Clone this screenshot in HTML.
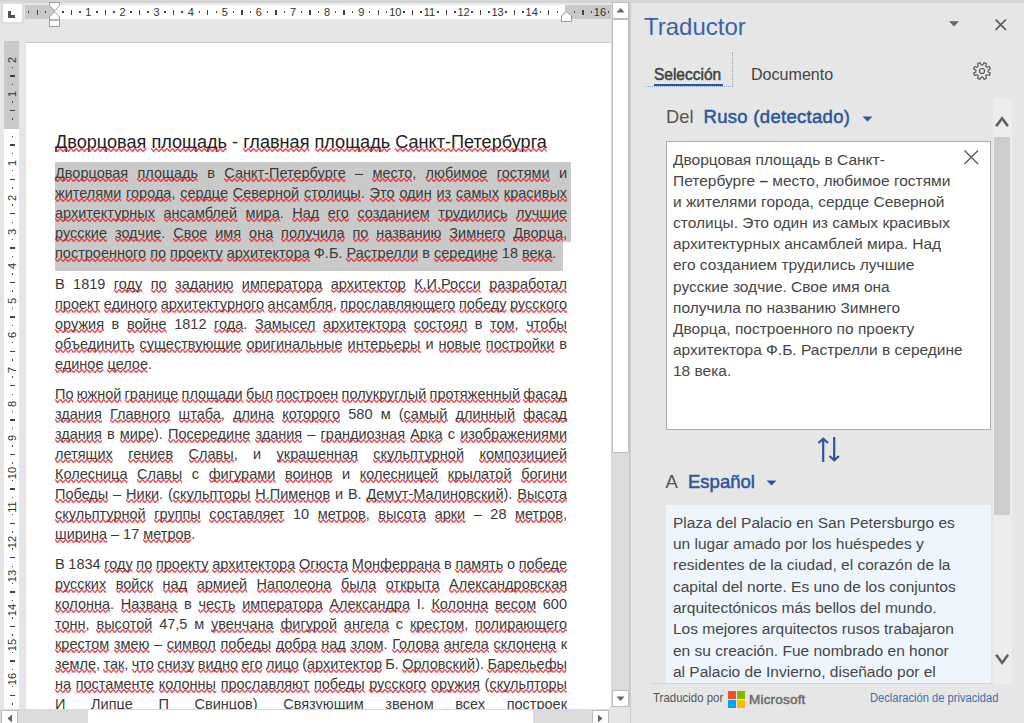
<!DOCTYPE html>
<html><head><meta charset="utf-8"><title>Word - Traductor</title><style>
*{margin:0;padding:0;box-sizing:border-box}
html,body{width:1024px;height:723px;overflow:hidden;background:#e6e6e6}
body{position:relative;font-family:"Liberation Sans",sans-serif}
.a{position:absolute}
#topstrip{left:0;top:0;width:1024px;height:2.5px;background:#d5d5d5}
#tabsel{left:0.5px;top:2px;width:23.5px;height:22px;background:#fff;border:2px solid #dedede}
#tabsel i{position:absolute;left:5.5px;top:7px;width:2.6px;height:7px;background:#555}
#tabsel b{position:absolute;left:5.5px;top:11.4px;width:7.4px;height:2.6px;background:#555}
#hr{left:25px;top:4.5px;width:586px;height:14.3px;background:#fff}
#hrl{left:0;top:0;width:29.3px;height:14.3px;background:#c9c9c9}
#hrr{left:539.8px;top:0;width:46.2px;height:14.3px;background:#c9c9c9}
.rn{position:absolute;top:-0.5px;width:20px;text-align:center;font-size:11px;line-height:16px;color:#333}
.rt{position:absolute;background:#444}
#vr{left:4px;top:41px;width:15px;height:668px;background:#fff}
#vrt{left:0;top:0;width:15px;height:88px;background:#c9c9c9}
.vn{position:absolute;left:-2.5px;width:20px;height:20px;text-align:center;font-size:11px;line-height:20px;color:#333;transform:rotate(-90deg)}
#page{left:26px;top:41.5px;width:585.5px;height:667.5px;background:#fff;border-top:1.2px solid #c8c8c8}
#doc{left:55px;top:0;width:512px;height:709px;color:#3a3a3a}
.ln{position:absolute;left:0;width:512px;height:20px;line-height:20px;white-space:nowrap;text-align:justify;text-align-last:justify;font-size:14.5px;word-spacing:-2px}
.ln.last{text-align:left;text-align-last:left;word-spacing:0}
.q{position:relative}
.tp{font-style:normal;color:transparent}
.w{position:absolute;left:0;top:12.77px;width:100%;height:4px;overflow:visible}
#title .w{top:16.71px}
#title{position:absolute;left:0;top:129.62px;width:560px;height:24px;line-height:24px;font-size:18.13px;color:#222;white-space:nowrap}
.hl{position:absolute;background:#c9c9c9}
#vsb{left:610.5px;top:2px;width:19.5px;height:707px;background:#dbdbdb;border-right:1.5px solid #cacaca}
.box{position:absolute;background:#fff;border:1px solid #bdbdbd}
#hsb{left:0;top:709px;width:611px;height:14px;background:#dbdbdb}
#corner{left:609px;top:707px;width:21px;height:16px;background:#e6e6e6}
#pane{left:630px;top:2.5px;width:394px;height:720.5px;background:#e6e6e6;border-left:1.5px solid #cdcdcd}
.pl{position:absolute;left:0;height:21px;line-height:21px;font-size:15.5px;letter-spacing:0px;color:#464646;white-space:nowrap}
.pt{position:absolute;white-space:nowrap;line-height:1}
</style></head>
<body>
<svg width="0" height="0" style="position:absolute"><defs><pattern id="wv" patternUnits="userSpaceOnUse" width="5.333" height="4"><path d="M-2.667,3.4 C-1.5,3.4 -1.2,0.6 0,0.6 C1.2,0.6 1.5,3.4 2.667,3.4 C3.8,3.4 4.1,0.6 5.333,0.6 C6.5,0.6 6.8,3.4 8,3.4" fill="none" stroke="#ec2226" stroke-width="1.2"/></pattern></defs></svg>
<div class="a" id="topstrip"></div>
<div class="a" id="tabsel"><i></i><b></b></div>
<div class="a" id="hr"><div class="a" id="hrl"></div><div class="a" id="hrr"></div>
<div class="rt" style="left:3.02px;top:6.8px;width:1.4px;height:1.4px"></div>
<div class="rt" style="left:11.55px;top:5px;width:1.4px;height:5px"></div>
<div class="rt" style="left:20.07px;top:6.8px;width:1.4px;height:1.4px"></div>
<div class="rt" style="left:37.12px;top:6.8px;width:1.4px;height:1.4px"></div>
<div class="rt" style="left:45.65px;top:5px;width:1.4px;height:5px"></div>
<div class="rt" style="left:54.17px;top:6.8px;width:1.4px;height:1.4px"></div>
<div class="rn" style="left:53.40px">1</div>
<div class="rt" style="left:71.22px;top:6.8px;width:1.4px;height:1.4px"></div>
<div class="rt" style="left:79.75px;top:5px;width:1.4px;height:5px"></div>
<div class="rt" style="left:88.27px;top:6.8px;width:1.4px;height:1.4px"></div>
<div class="rn" style="left:87.50px">2</div>
<div class="rt" style="left:105.33px;top:6.8px;width:1.4px;height:1.4px"></div>
<div class="rt" style="left:113.85px;top:5px;width:1.4px;height:5px"></div>
<div class="rt" style="left:122.37px;top:6.8px;width:1.4px;height:1.4px"></div>
<div class="rn" style="left:121.60px">3</div>
<div class="rt" style="left:139.43px;top:6.8px;width:1.4px;height:1.4px"></div>
<div class="rt" style="left:147.95px;top:5px;width:1.4px;height:5px"></div>
<div class="rt" style="left:156.48px;top:6.8px;width:1.4px;height:1.4px"></div>
<div class="rn" style="left:155.70px">4</div>
<div class="rt" style="left:173.53px;top:6.8px;width:1.4px;height:1.4px"></div>
<div class="rt" style="left:182.05px;top:5px;width:1.4px;height:5px"></div>
<div class="rt" style="left:190.57px;top:6.8px;width:1.4px;height:1.4px"></div>
<div class="rn" style="left:189.80px">5</div>
<div class="rt" style="left:207.62px;top:6.8px;width:1.4px;height:1.4px"></div>
<div class="rt" style="left:216.15px;top:5px;width:1.4px;height:5px"></div>
<div class="rt" style="left:224.68px;top:6.8px;width:1.4px;height:1.4px"></div>
<div class="rn" style="left:223.90px">6</div>
<div class="rt" style="left:241.73px;top:6.8px;width:1.4px;height:1.4px"></div>
<div class="rt" style="left:250.25px;top:5px;width:1.4px;height:5px"></div>
<div class="rt" style="left:258.78px;top:6.8px;width:1.4px;height:1.4px"></div>
<div class="rn" style="left:258.00px">7</div>
<div class="rt" style="left:275.83px;top:6.8px;width:1.4px;height:1.4px"></div>
<div class="rt" style="left:284.35px;top:5px;width:1.4px;height:5px"></div>
<div class="rt" style="left:292.88px;top:6.8px;width:1.4px;height:1.4px"></div>
<div class="rn" style="left:292.10px">8</div>
<div class="rt" style="left:309.93px;top:6.8px;width:1.4px;height:1.4px"></div>
<div class="rt" style="left:318.45px;top:5px;width:1.4px;height:5px"></div>
<div class="rt" style="left:326.98px;top:6.8px;width:1.4px;height:1.4px"></div>
<div class="rn" style="left:326.20px">9</div>
<div class="rt" style="left:344.03px;top:6.8px;width:1.4px;height:1.4px"></div>
<div class="rt" style="left:352.55px;top:5px;width:1.4px;height:5px"></div>
<div class="rt" style="left:361.08px;top:6.8px;width:1.4px;height:1.4px"></div>
<div class="rn" style="left:360.30px">10</div>
<div class="rt" style="left:378.13px;top:6.8px;width:1.4px;height:1.4px"></div>
<div class="rt" style="left:386.65px;top:5px;width:1.4px;height:5px"></div>
<div class="rt" style="left:395.18px;top:6.8px;width:1.4px;height:1.4px"></div>
<div class="rn" style="left:394.40px">11</div>
<div class="rt" style="left:412.23px;top:6.8px;width:1.4px;height:1.4px"></div>
<div class="rt" style="left:420.75px;top:5px;width:1.4px;height:5px"></div>
<div class="rt" style="left:429.28px;top:6.8px;width:1.4px;height:1.4px"></div>
<div class="rn" style="left:428.50px">12</div>
<div class="rt" style="left:446.33px;top:6.8px;width:1.4px;height:1.4px"></div>
<div class="rt" style="left:454.85px;top:5px;width:1.4px;height:5px"></div>
<div class="rt" style="left:463.38px;top:6.8px;width:1.4px;height:1.4px"></div>
<div class="rn" style="left:462.60px">13</div>
<div class="rt" style="left:480.43px;top:6.8px;width:1.4px;height:1.4px"></div>
<div class="rt" style="left:488.95px;top:5px;width:1.4px;height:5px"></div>
<div class="rt" style="left:497.47px;top:6.8px;width:1.4px;height:1.4px"></div>
<div class="rn" style="left:496.70px">14</div>
<div class="rt" style="left:514.52px;top:6.8px;width:1.4px;height:1.4px"></div>
<div class="rt" style="left:523.05px;top:5px;width:1.4px;height:5px"></div>
<div class="rt" style="left:531.57px;top:6.8px;width:1.4px;height:1.4px"></div>
<div class="rt" style="left:548.62px;top:6.8px;width:1.4px;height:1.4px"></div>
<div class="rt" style="left:557.15px;top:5px;width:1.4px;height:5px"></div>
<div class="rt" style="left:565.67px;top:6.8px;width:1.4px;height:1.4px"></div>
<div class="rn" style="left:564.90px">16</div>
<div class="rt" style="left:582.72px;top:6.8px;width:1.4px;height:1.4px"></div>
</div>
<svg class="a" style="left:48px;top:1px" width="14" height="27"><path d="M1.5,1.5 L11.5,1.5 L11.5,4.5 L6.5,10 L1.5,4.5 Z M6.5,10.5 L11.5,16 L11.5,19 L1.5,19 L1.5,16 Z M1.5,19 L11.5,19 L11.5,25.5 L1.5,25.5 Z" fill="#fff" stroke="#9a9a9a" stroke-width="1"/></svg>
<svg class="a" style="left:560px;top:11px" width="14" height="12"><path d="M1.5,4.5 L6.5,0.8 L11.5,4.5 L11.5,10.5 L1.5,10.5 Z" fill="#fff" stroke="#9a9a9a" stroke-width="1"/></svg>
<div class="a" id="page"></div>
<div class="a" id="vr"><div class="a" id="vrt"></div>
<div class="vn" style="top:8.90px">2</div>
<div class="rt" style="top:25.80px;left:8px;height:1.4px;width:1.4px"></div>
<div class="rt" style="top:34.40px;left:6.4px;height:1.4px;width:5px"></div>
<div class="rt" style="top:43.00px;left:8px;height:1.4px;width:1.4px"></div>
<div class="vn" style="top:43.30px">1</div>
<div class="rt" style="top:60.20px;left:8px;height:1.4px;width:1.4px"></div>
<div class="rt" style="top:68.80px;left:6.4px;height:1.4px;width:5px"></div>
<div class="rt" style="top:77.40px;left:8px;height:1.4px;width:1.4px"></div>
<div class="rt" style="top:94.60px;left:8px;height:1.4px;width:1.4px"></div>
<div class="rt" style="top:103.20px;left:6.4px;height:1.4px;width:5px"></div>
<div class="rt" style="top:111.80px;left:8px;height:1.4px;width:1.4px"></div>
<div class="vn" style="top:112.10px">1</div>
<div class="rt" style="top:129.00px;left:8px;height:1.4px;width:1.4px"></div>
<div class="rt" style="top:137.60px;left:6.4px;height:1.4px;width:5px"></div>
<div class="rt" style="top:146.20px;left:8px;height:1.4px;width:1.4px"></div>
<div class="vn" style="top:146.50px">2</div>
<div class="rt" style="top:163.40px;left:8px;height:1.4px;width:1.4px"></div>
<div class="rt" style="top:172.00px;left:6.4px;height:1.4px;width:5px"></div>
<div class="rt" style="top:180.60px;left:8px;height:1.4px;width:1.4px"></div>
<div class="vn" style="top:180.90px">3</div>
<div class="rt" style="top:197.80px;left:8px;height:1.4px;width:1.4px"></div>
<div class="rt" style="top:206.40px;left:6.4px;height:1.4px;width:5px"></div>
<div class="rt" style="top:215.00px;left:8px;height:1.4px;width:1.4px"></div>
<div class="vn" style="top:215.30px">4</div>
<div class="rt" style="top:232.20px;left:8px;height:1.4px;width:1.4px"></div>
<div class="rt" style="top:240.80px;left:6.4px;height:1.4px;width:5px"></div>
<div class="rt" style="top:249.40px;left:8px;height:1.4px;width:1.4px"></div>
<div class="vn" style="top:249.70px">5</div>
<div class="rt" style="top:266.60px;left:8px;height:1.4px;width:1.4px"></div>
<div class="rt" style="top:275.20px;left:6.4px;height:1.4px;width:5px"></div>
<div class="rt" style="top:283.80px;left:8px;height:1.4px;width:1.4px"></div>
<div class="vn" style="top:284.10px">6</div>
<div class="rt" style="top:301.00px;left:8px;height:1.4px;width:1.4px"></div>
<div class="rt" style="top:309.60px;left:6.4px;height:1.4px;width:5px"></div>
<div class="rt" style="top:318.20px;left:8px;height:1.4px;width:1.4px"></div>
<div class="vn" style="top:318.50px">7</div>
<div class="rt" style="top:335.40px;left:8px;height:1.4px;width:1.4px"></div>
<div class="rt" style="top:344.00px;left:6.4px;height:1.4px;width:5px"></div>
<div class="rt" style="top:352.60px;left:8px;height:1.4px;width:1.4px"></div>
<div class="vn" style="top:352.90px">8</div>
<div class="rt" style="top:369.80px;left:8px;height:1.4px;width:1.4px"></div>
<div class="rt" style="top:378.40px;left:6.4px;height:1.4px;width:5px"></div>
<div class="rt" style="top:387.00px;left:8px;height:1.4px;width:1.4px"></div>
<div class="vn" style="top:387.30px">9</div>
<div class="rt" style="top:404.20px;left:8px;height:1.4px;width:1.4px"></div>
<div class="rt" style="top:412.80px;left:6.4px;height:1.4px;width:5px"></div>
<div class="rt" style="top:421.40px;left:8px;height:1.4px;width:1.4px"></div>
<div class="vn" style="top:421.70px">10</div>
<div class="rt" style="top:438.60px;left:8px;height:1.4px;width:1.4px"></div>
<div class="rt" style="top:447.20px;left:6.4px;height:1.4px;width:5px"></div>
<div class="rt" style="top:455.80px;left:8px;height:1.4px;width:1.4px"></div>
<div class="vn" style="top:456.10px">11</div>
<div class="rt" style="top:473.00px;left:8px;height:1.4px;width:1.4px"></div>
<div class="rt" style="top:481.60px;left:6.4px;height:1.4px;width:5px"></div>
<div class="rt" style="top:490.20px;left:8px;height:1.4px;width:1.4px"></div>
<div class="vn" style="top:490.50px">12</div>
<div class="rt" style="top:507.40px;left:8px;height:1.4px;width:1.4px"></div>
<div class="rt" style="top:516.00px;left:6.4px;height:1.4px;width:5px"></div>
<div class="rt" style="top:524.60px;left:8px;height:1.4px;width:1.4px"></div>
<div class="vn" style="top:524.90px">13</div>
<div class="rt" style="top:541.80px;left:8px;height:1.4px;width:1.4px"></div>
<div class="rt" style="top:550.40px;left:6.4px;height:1.4px;width:5px"></div>
<div class="rt" style="top:559.00px;left:8px;height:1.4px;width:1.4px"></div>
<div class="vn" style="top:559.30px">14</div>
<div class="rt" style="top:576.20px;left:8px;height:1.4px;width:1.4px"></div>
<div class="rt" style="top:584.80px;left:6.4px;height:1.4px;width:5px"></div>
<div class="rt" style="top:593.40px;left:8px;height:1.4px;width:1.4px"></div>
<div class="vn" style="top:593.70px">15</div>
<div class="rt" style="top:610.60px;left:8px;height:1.4px;width:1.4px"></div>
<div class="rt" style="top:619.20px;left:6.4px;height:1.4px;width:5px"></div>
<div class="rt" style="top:627.80px;left:8px;height:1.4px;width:1.4px"></div>
<div class="vn" style="top:628.10px">16</div>
<div class="rt" style="top:645.00px;left:8px;height:1.4px;width:1.4px"></div>
<div class="rt" style="top:653.60px;left:6.4px;height:1.4px;width:5px"></div>
<div class="rt" style="top:662.20px;left:8px;height:1.4px;width:1.4px"></div>
</div>
<div class="a" id="doc">
<div class="hl" style="left:0;top:161.6px;width:515.8px;height:80px"></div>
<div class="hl" style="left:0;top:241.5px;width:508px;height:29.6px"></div>
<div id="title"><span class="q">Дворцовая<svg class="w"><rect width="100%" height="4" fill="url(#wv)"/></svg></span> <span class="q">площадь<svg class="w"><rect width="100%" height="4" fill="url(#wv)"/></svg></span> - <span class="q">главная<svg class="w"><rect width="100%" height="4" fill="url(#wv)"/></svg></span> <span class="q">площадь<svg class="w"><rect width="100%" height="4" fill="url(#wv)"/></svg></span> <span class="q">Санкт-Петербурга<svg class="w"><rect width="100%" height="4" fill="url(#wv)"/></svg></span></div>
<div class="ln" style="top:163.48px"><span class="q">Дворцовая<svg class="w"><rect width="100%" height="4" fill="url(#wv)"/></svg></span> <span class="q">площадь<svg class="w"><rect width="100%" height="4" fill="url(#wv)"/></svg></span> в <span class="q">Санкт-Петербурге<svg class="w"><rect width="100%" height="4" fill="url(#wv)"/></svg></span> – <span class="q">место<svg class="w"><rect width="100%" height="4" fill="url(#wv)"/></svg></span>, <span class="q">любимое<svg class="w"><rect width="100%" height="4" fill="url(#wv)"/></svg></span> <span class="q">гостями<svg class="w"><rect width="100%" height="4" fill="url(#wv)"/></svg></span> и</div>
<div class="ln" style="top:183.48px"><span class="q">жителями<svg class="w"><rect width="100%" height="4" fill="url(#wv)"/></svg></span> <span class="q">города<svg class="w"><rect width="100%" height="4" fill="url(#wv)"/></svg></span>, <span class="q">сердце<svg class="w"><rect width="100%" height="4" fill="url(#wv)"/></svg></span> <span class="q">Северной<svg class="w"><rect width="100%" height="4" fill="url(#wv)"/></svg></span> <span class="q">столицы<svg class="w"><rect width="100%" height="4" fill="url(#wv)"/></svg></span>. <span class="q">Это<svg class="w"><rect width="100%" height="4" fill="url(#wv)"/></svg></span> <span class="q">один<svg class="w"><rect width="100%" height="4" fill="url(#wv)"/></svg></span> <span class="q">из<svg class="w"><rect width="100%" height="4" fill="url(#wv)"/></svg></span> <span class="q">самых<svg class="w"><rect width="100%" height="4" fill="url(#wv)"/></svg></span> <span class="q">красивых<svg class="w"><rect width="100%" height="4" fill="url(#wv)"/></svg></span></div>
<div class="ln" style="top:203.48px"><span class="q">архитектурных<svg class="w"><rect width="100%" height="4" fill="url(#wv)"/></svg></span> <span class="q">ансамблей<svg class="w"><rect width="100%" height="4" fill="url(#wv)"/></svg></span> <span class="q">мира<svg class="w"><rect width="100%" height="4" fill="url(#wv)"/></svg></span>. <span class="q">Над<svg class="w"><rect width="100%" height="4" fill="url(#wv)"/></svg></span> <span class="q">его<svg class="w"><rect width="100%" height="4" fill="url(#wv)"/></svg></span> <span class="q">созданием<svg class="w"><rect width="100%" height="4" fill="url(#wv)"/></svg></span> <span class="q">трудились<svg class="w"><rect width="100%" height="4" fill="url(#wv)"/></svg></span> <span class="q">лучшие<svg class="w"><rect width="100%" height="4" fill="url(#wv)"/></svg></span></div>
<div class="ln" style="top:223.48px"><span class="q">русские<svg class="w"><rect width="100%" height="4" fill="url(#wv)"/></svg></span> <span class="q">зодчие<svg class="w"><rect width="100%" height="4" fill="url(#wv)"/></svg></span>. <span class="q">Свое<svg class="w"><rect width="100%" height="4" fill="url(#wv)"/></svg></span> <span class="q">имя<svg class="w"><rect width="100%" height="4" fill="url(#wv)"/></svg></span> <span class="q">она<svg class="w"><rect width="100%" height="4" fill="url(#wv)"/></svg></span> <span class="q">получила<svg class="w"><rect width="100%" height="4" fill="url(#wv)"/></svg></span> <span class="q">по<svg class="w"><rect width="100%" height="4" fill="url(#wv)"/></svg></span> <span class="q">названию<svg class="w"><rect width="100%" height="4" fill="url(#wv)"/></svg></span> <span class="q">Зимнего<svg class="w"><rect width="100%" height="4" fill="url(#wv)"/></svg></span> <span class="q">Дворца<svg class="w"><rect width="100%" height="4" fill="url(#wv)"/></svg></span>,</div>
<div class="ln last" style="top:243.48px"><span class="q">построенного<svg class="w"><rect width="100%" height="4" fill="url(#wv)"/></svg></span> <span class="q">по<svg class="w"><rect width="100%" height="4" fill="url(#wv)"/></svg></span> <span class="q">проекту<svg class="w"><rect width="100%" height="4" fill="url(#wv)"/></svg></span> <span class="q">архитектора<svg class="w"><rect width="100%" height="4" fill="url(#wv)"/></svg></span> Ф.Б. <span class="q">Растрелли<svg class="w"><rect width="100%" height="4" fill="url(#wv)"/></svg></span> в <span class="q">середине<svg class="w"><rect width="100%" height="4" fill="url(#wv)"/></svg></span> 18 <span class="q">века<svg class="w"><rect width="100%" height="4" fill="url(#wv)"/></svg></span>.</div>
<div class="ln" style="top:273.98px">В 1819 <span class="q">году<svg class="w"><rect width="100%" height="4" fill="url(#wv)"/></svg></span> <span class="q">по<svg class="w"><rect width="100%" height="4" fill="url(#wv)"/></svg></span> <span class="q">заданию<svg class="w"><rect width="100%" height="4" fill="url(#wv)"/></svg></span> <span class="q">императора<svg class="w"><rect width="100%" height="4" fill="url(#wv)"/></svg></span> <span class="q">архитектор<svg class="w"><rect width="100%" height="4" fill="url(#wv)"/></svg></span> <span class="q">К.И.Росси<svg class="w"><rect width="100%" height="4" fill="url(#wv)"/></svg></span> <span class="q">разработал<svg class="w"><rect width="100%" height="4" fill="url(#wv)"/></svg></span></div>
<div class="ln" style="top:293.98px"><span class="q">проект<svg class="w"><rect width="100%" height="4" fill="url(#wv)"/></svg></span> <span class="q">единого<svg class="w"><rect width="100%" height="4" fill="url(#wv)"/></svg></span> <span class="q">архитектурного<svg class="w"><rect width="100%" height="4" fill="url(#wv)"/></svg></span> <span class="q">ансамбля<svg class="w"><rect width="100%" height="4" fill="url(#wv)"/></svg></span>, <span class="q">прославляющего<svg class="w"><rect width="100%" height="4" fill="url(#wv)"/></svg></span> <span class="q">победу<svg class="w"><rect width="100%" height="4" fill="url(#wv)"/></svg></span> <span class="q">русского<svg class="w"><rect width="100%" height="4" fill="url(#wv)"/></svg></span></div>
<div class="ln" style="top:313.98px"><span class="q">оружия<svg class="w"><rect width="100%" height="4" fill="url(#wv)"/></svg></span> в <span class="q">войне<svg class="w"><rect width="100%" height="4" fill="url(#wv)"/></svg></span> 1812 <span class="q">года<svg class="w"><rect width="100%" height="4" fill="url(#wv)"/></svg></span>. <span class="q">Замысел<svg class="w"><rect width="100%" height="4" fill="url(#wv)"/></svg></span> <span class="q">архитектора<svg class="w"><rect width="100%" height="4" fill="url(#wv)"/></svg></span> <span class="q">состоял<svg class="w"><rect width="100%" height="4" fill="url(#wv)"/></svg></span> в <span class="q">том<svg class="w"><rect width="100%" height="4" fill="url(#wv)"/></svg></span>, <span class="q">чтобы<svg class="w"><rect width="100%" height="4" fill="url(#wv)"/></svg></span></div>
<div class="ln" style="top:333.98px"><span class="q">объединить<svg class="w"><rect width="100%" height="4" fill="url(#wv)"/></svg></span> <span class="q">существующие<svg class="w"><rect width="100%" height="4" fill="url(#wv)"/></svg></span> <span class="q">оригинальные<svg class="w"><rect width="100%" height="4" fill="url(#wv)"/></svg></span> <span class="q">интерьеры<svg class="w"><rect width="100%" height="4" fill="url(#wv)"/></svg></span> и <span class="q">новые<svg class="w"><rect width="100%" height="4" fill="url(#wv)"/></svg></span> <span class="q">постройки<svg class="w"><rect width="100%" height="4" fill="url(#wv)"/></svg></span> в</div>
<div class="ln last" style="top:353.98px"><span class="q">единое<svg class="w"><rect width="100%" height="4" fill="url(#wv)"/></svg></span> <span class="q">целое<svg class="w"><rect width="100%" height="4" fill="url(#wv)"/></svg></span>.</div>
<div class="ln" style="top:383.98px"><span class="q">По<svg class="w"><rect width="100%" height="4" fill="url(#wv)"/></svg></span> <span class="q">южной<svg class="w"><rect width="100%" height="4" fill="url(#wv)"/></svg></span> <span class="q">границе<svg class="w"><rect width="100%" height="4" fill="url(#wv)"/></svg></span> <span class="q">площади<svg class="w"><rect width="100%" height="4" fill="url(#wv)"/></svg></span> <span class="q">был<svg class="w"><rect width="100%" height="4" fill="url(#wv)"/></svg></span> <span class="q">построен<svg class="w"><rect width="100%" height="4" fill="url(#wv)"/></svg></span> <span class="q">полукруглый<svg class="w"><rect width="100%" height="4" fill="url(#wv)"/></svg></span> <span class="q">протяженный<svg class="w"><rect width="100%" height="4" fill="url(#wv)"/></svg></span> <span class="q">фасад<svg class="w"><rect width="100%" height="4" fill="url(#wv)"/></svg></span></div>
<div class="ln" style="top:403.98px"><span class="q">здания<svg class="w"><rect width="100%" height="4" fill="url(#wv)"/></svg></span> <span class="q">Главного<svg class="w"><rect width="100%" height="4" fill="url(#wv)"/></svg></span> <span class="q">штаба<svg class="w"><rect width="100%" height="4" fill="url(#wv)"/></svg></span>, <span class="q">длина<svg class="w"><rect width="100%" height="4" fill="url(#wv)"/></svg></span> <span class="q">которого<svg class="w"><rect width="100%" height="4" fill="url(#wv)"/></svg></span> 580 м (<span class="q">самый<svg class="w"><rect width="100%" height="4" fill="url(#wv)"/></svg></span> <span class="q">длинный<svg class="w"><rect width="100%" height="4" fill="url(#wv)"/></svg></span> <span class="q">фасад<svg class="w"><rect width="100%" height="4" fill="url(#wv)"/></svg></span></div>
<div class="ln" style="top:423.98px"><span class="q">здания<svg class="w"><rect width="100%" height="4" fill="url(#wv)"/></svg></span> в <span class="q">мире<svg class="w"><rect width="100%" height="4" fill="url(#wv)"/></svg></span>). <span class="q">Посередине<svg class="w"><rect width="100%" height="4" fill="url(#wv)"/></svg></span> <span class="q">здания<svg class="w"><rect width="100%" height="4" fill="url(#wv)"/></svg></span> – <span class="q">грандиозная<svg class="w"><rect width="100%" height="4" fill="url(#wv)"/></svg></span> <span class="q">Арка<svg class="w"><rect width="100%" height="4" fill="url(#wv)"/></svg></span> с <span class="q">изображениями<svg class="w"><rect width="100%" height="4" fill="url(#wv)"/></svg></span></div>
<div class="ln" style="top:443.98px"><span class="q">летящих<svg class="w"><rect width="100%" height="4" fill="url(#wv)"/></svg></span> <span class="q">гениев<svg class="w"><rect width="100%" height="4" fill="url(#wv)"/></svg></span> <span class="q">Славы<svg class="w"><rect width="100%" height="4" fill="url(#wv)"/></svg></span>, и <span class="q">украшенная<svg class="w"><rect width="100%" height="4" fill="url(#wv)"/></svg></span> <span class="q">скульптурной<svg class="w"><rect width="100%" height="4" fill="url(#wv)"/></svg></span> <span class="q">композицией<svg class="w"><rect width="100%" height="4" fill="url(#wv)"/></svg></span></div>
<div class="ln" style="top:463.98px"><span class="q">Колесница<svg class="w"><rect width="100%" height="4" fill="url(#wv)"/></svg></span> <span class="q">Славы<svg class="w"><rect width="100%" height="4" fill="url(#wv)"/></svg></span> с <span class="q">фигурами<svg class="w"><rect width="100%" height="4" fill="url(#wv)"/></svg></span> <span class="q">воинов<svg class="w"><rect width="100%" height="4" fill="url(#wv)"/></svg></span> и <span class="q">колесницей<svg class="w"><rect width="100%" height="4" fill="url(#wv)"/></svg></span> <span class="q">крылатой<svg class="w"><rect width="100%" height="4" fill="url(#wv)"/></svg></span> <span class="q">богини<svg class="w"><rect width="100%" height="4" fill="url(#wv)"/></svg></span></div>
<div class="ln" style="top:483.98px"><span class="q">Победы<svg class="w"><rect width="100%" height="4" fill="url(#wv)"/></svg></span> – <span class="q">Ники<svg class="w"><rect width="100%" height="4" fill="url(#wv)"/></svg></span>. (<span class="q">скульпторы<svg class="w"><rect width="100%" height="4" fill="url(#wv)"/></svg></span> <span class="q">Н.Пименов<svg class="w"><rect width="100%" height="4" fill="url(#wv)"/></svg></span> и В. <span class="q">Демут-Малиновский<svg class="w"><rect width="100%" height="4" fill="url(#wv)"/></svg></span>). <span class="q">Высота<svg class="w"><rect width="100%" height="4" fill="url(#wv)"/></svg></span></div>
<div class="ln" style="top:503.98px"><span class="q">скульптурной<svg class="w"><rect width="100%" height="4" fill="url(#wv)"/></svg></span> <span class="q">группы<svg class="w"><rect width="100%" height="4" fill="url(#wv)"/></svg></span> <span class="q">составляет<svg class="w"><rect width="100%" height="4" fill="url(#wv)"/></svg></span> 10 <span class="q">метров<svg class="w"><rect width="100%" height="4" fill="url(#wv)"/></svg></span>, <span class="q">высота<svg class="w"><rect width="100%" height="4" fill="url(#wv)"/></svg></span> <span class="q">арки<svg class="w"><rect width="100%" height="4" fill="url(#wv)"/></svg></span> – 28 <span class="q">метров<svg class="w"><rect width="100%" height="4" fill="url(#wv)"/></svg></span>,</div>
<div class="ln last" style="top:523.98px"><span class="q">ширина<svg class="w"><rect width="100%" height="4" fill="url(#wv)"/></svg></span> – 17 <span class="q">метров<svg class="w"><rect width="100%" height="4" fill="url(#wv)"/></svg></span>.</div>
<div class="ln" style="top:553.98px">В 1834 <span class="q">году<svg class="w"><rect width="100%" height="4" fill="url(#wv)"/></svg></span> <span class="q">по<svg class="w"><rect width="100%" height="4" fill="url(#wv)"/></svg></span> <span class="q">проекту<svg class="w"><rect width="100%" height="4" fill="url(#wv)"/></svg></span> <span class="q">архитектора<svg class="w"><rect width="100%" height="4" fill="url(#wv)"/></svg></span> <span class="q">Огюста<svg class="w"><rect width="100%" height="4" fill="url(#wv)"/></svg></span> <span class="q">Монферрана<svg class="w"><rect width="100%" height="4" fill="url(#wv)"/></svg></span> в <span class="q">память<svg class="w"><rect width="100%" height="4" fill="url(#wv)"/></svg></span> о <span class="q">победе<svg class="w"><rect width="100%" height="4" fill="url(#wv)"/></svg></span></div>
<div class="ln" style="top:573.98px"><span class="q">русских<svg class="w"><rect width="100%" height="4" fill="url(#wv)"/></svg></span> <span class="q">войск<svg class="w"><rect width="100%" height="4" fill="url(#wv)"/></svg></span> <span class="q">над<svg class="w"><rect width="100%" height="4" fill="url(#wv)"/></svg></span> <span class="q">армией<svg class="w"><rect width="100%" height="4" fill="url(#wv)"/></svg></span> <span class="q">Наполеона<svg class="w"><rect width="100%" height="4" fill="url(#wv)"/></svg></span> <span class="q">была<svg class="w"><rect width="100%" height="4" fill="url(#wv)"/></svg></span> <span class="q">открыта<svg class="w"><rect width="100%" height="4" fill="url(#wv)"/></svg></span> <span class="q">Александровская<svg class="w"><rect width="100%" height="4" fill="url(#wv)"/></svg></span></div>
<div class="ln" style="top:593.98px"><span class="q">колонна<svg class="w"><rect width="100%" height="4" fill="url(#wv)"/></svg></span>. <span class="q">Названа<svg class="w"><rect width="100%" height="4" fill="url(#wv)"/></svg></span> в <span class="q">честь<svg class="w"><rect width="100%" height="4" fill="url(#wv)"/></svg></span> <span class="q">императора<svg class="w"><rect width="100%" height="4" fill="url(#wv)"/></svg></span> <span class="q">Александра<svg class="w"><rect width="100%" height="4" fill="url(#wv)"/></svg></span> I. <span class="q">Колонна<svg class="w"><rect width="100%" height="4" fill="url(#wv)"/></svg></span> <span class="q">весом<svg class="w"><rect width="100%" height="4" fill="url(#wv)"/></svg></span> 600</div>
<div class="ln" style="top:613.98px"><span class="q">тонн<svg class="w"><rect width="100%" height="4" fill="url(#wv)"/></svg></span>, <span class="q">высотой<svg class="w"><rect width="100%" height="4" fill="url(#wv)"/></svg></span> 47,5 м <span class="q">увенчана<svg class="w"><rect width="100%" height="4" fill="url(#wv)"/></svg></span> <span class="q">фигурой<svg class="w"><rect width="100%" height="4" fill="url(#wv)"/></svg></span> <span class="q">ангела<svg class="w"><rect width="100%" height="4" fill="url(#wv)"/></svg></span> с <span class="q">крестом<svg class="w"><rect width="100%" height="4" fill="url(#wv)"/></svg></span>, <span class="q">полирающего<svg class="w"><rect width="100%" height="4" fill="url(#wv)"/></svg></span></div>
<div class="ln" style="top:633.98px"><span class="q">крестом<svg class="w"><rect width="100%" height="4" fill="url(#wv)"/></svg></span> <span class="q">змею<svg class="w"><rect width="100%" height="4" fill="url(#wv)"/></svg></span> – <span class="q">символ<svg class="w"><rect width="100%" height="4" fill="url(#wv)"/></svg></span> <span class="q">победы<svg class="w"><rect width="100%" height="4" fill="url(#wv)"/></svg></span> <span class="q">добра<svg class="w"><rect width="100%" height="4" fill="url(#wv)"/></svg></span> <span class="q">над<svg class="w"><rect width="100%" height="4" fill="url(#wv)"/></svg></span> <span class="q">злом<svg class="w"><rect width="100%" height="4" fill="url(#wv)"/></svg></span>. <span class="q">Голова<svg class="w"><rect width="100%" height="4" fill="url(#wv)"/></svg></span> <span class="q">ангела<svg class="w"><rect width="100%" height="4" fill="url(#wv)"/></svg></span> <span class="q">склонена<svg class="w"><rect width="100%" height="4" fill="url(#wv)"/></svg></span> к</div>
<div class="ln" style="top:653.98px"><span class="q">земле<svg class="w"><rect width="100%" height="4" fill="url(#wv)"/></svg></span>, <span class="q">так<svg class="w"><rect width="100%" height="4" fill="url(#wv)"/></svg></span>, <span class="q">что<svg class="w"><rect width="100%" height="4" fill="url(#wv)"/></svg></span> <span class="q">снизу<svg class="w"><rect width="100%" height="4" fill="url(#wv)"/></svg></span> <span class="q">видно<svg class="w"><rect width="100%" height="4" fill="url(#wv)"/></svg></span> <span class="q">его<svg class="w"><rect width="100%" height="4" fill="url(#wv)"/></svg></span> <span class="q">лицо<svg class="w"><rect width="100%" height="4" fill="url(#wv)"/></svg></span> (<span class="q">архитектор<svg class="w"><rect width="100%" height="4" fill="url(#wv)"/></svg></span> Б. <span class="q">Орловский<svg class="w"><rect width="100%" height="4" fill="url(#wv)"/></svg></span>). <span class="q">Барельефы<svg class="w"><rect width="100%" height="4" fill="url(#wv)"/></svg></span></div>
<div class="ln" style="top:673.98px"><span class="q">на<svg class="w"><rect width="100%" height="4" fill="url(#wv)"/></svg></span> <span class="q">постаменте<svg class="w"><rect width="100%" height="4" fill="url(#wv)"/></svg></span> <span class="q">колонны<svg class="w"><rect width="100%" height="4" fill="url(#wv)"/></svg></span> <span class="q">прославляют<svg class="w"><rect width="100%" height="4" fill="url(#wv)"/></svg></span> <span class="q">победы<svg class="w"><rect width="100%" height="4" fill="url(#wv)"/></svg></span> <span class="q">русского<svg class="w"><rect width="100%" height="4" fill="url(#wv)"/></svg></span> <span class="q">оружия<svg class="w"><rect width="100%" height="4" fill="url(#wv)"/></svg></span> (<span class="q">скульпторы<svg class="w"><rect width="100%" height="4" fill="url(#wv)"/></svg></span></div>
<div class="ln" style="top:693.98px">И<i class="tp">.</i> Липце<i class="tp">,</i> П<i class="tp">.</i> <span class="q">Свинцов<svg class="w"><rect width="100%" height="4" fill="url(#wv)"/></svg></span>)<i class="tp">.</i> <span class="q">Связующим<svg class="w"><rect width="100%" height="4" fill="url(#wv)"/></svg></span> <span class="q">звеном<svg class="w"><rect width="100%" height="4" fill="url(#wv)"/></svg></span> <span class="q">всех<svg class="w"><rect width="100%" height="4" fill="url(#wv)"/></svg></span> <span class="q">построек<svg class="w"><rect width="100%" height="4" fill="url(#wv)"/></svg></span></div>
</div>
<div class="a" id="vsb">
 <div class="box" style="left:1px;top:0;width:17px;height:16.5px"></div>
 <div class="box" style="left:1px;top:16.5px;width:17px;height:434px"></div>
 <div class="box" style="left:1px;top:687.5px;width:17px;height:17px"></div>
 <svg class="a" style="left:1px;top:0" width="17" height="17"><path d="M4.5,10.5 L12.5,10.5 L8.5,6 Z" fill="#666"/></svg>
 <svg class="a" style="left:1px;top:687.5px" width="17" height="17"><path d="M4.5,6.5 L12.5,6.5 L8.5,11 Z" fill="#666"/></svg>
</div>
<div class="a" id="hsb">
 <div class="box" style="left:88px;top:0;width:445px;height:16px;border:none;border-top:1px solid #d6d6d6"></div>
 <div class="box" style="left:1px;top:0.5px;width:17px;height:16px"></div>
 <div class="box" style="left:592px;top:0.5px;width:17px;height:16px"></div>
 <svg class="a" style="left:1px;top:0.5px" width="17" height="16"><path d="M11,4.5 L11,12.5 L6.5,8.5 Z" fill="#666"/></svg>
 <svg class="a" style="left:592px;top:0.5px" width="17" height="16"><path d="M6,4.5 L6,12.5 L10.5,8.5 Z" fill="#666"/></svg>
</div>
<div class="a" id="corner"></div>
<div class="a" id="pane"></div>
<div class="pt" style="left:644px;top:15.08px;font-size:24px;color:#3863a6;font-weight:normal;letter-spacing:0px;">Traductor</div><svg class="a" style="left:945px;top:18px" width="18" height="12"><path d="M4,3.2 L14,3.2 L9,8.6 Z" fill="#666"/></svg><svg class="a" style="left:992px;top:16px" width="18" height="18"><path d="M3.5,3.5 L14,14 M14,3.5 L3.5,14" stroke="#555" stroke-width="1.7"/></svg><div class="pt" style="left:653.5px;top:66.63px;font-size:15.8px;color:#444;font-weight:normal;letter-spacing:0px;transform:scaleX(0.98);transform-origin:0 0;-webkit-text-stroke:0.5px #444;">Selección</div><div class="a" style="left:654px;top:83.8px;width:69px;height:2.4px;background:#2b579a"></div><div class="a" style="left:646px;top:85.5px;width:86.5px;height:0;border-top:1px dotted #8aa4c8"></div><div class="a" style="left:731.5px;top:52px;width:0;height:34px;border-left:1px dotted #8aa4c8"></div><div class="pt" style="left:750.5px;top:66.32px;font-size:16.4px;color:#444;font-weight:normal;letter-spacing:0px;transform:scaleX(0.98);transform-origin:0 0;">Documento</div><svg class="a" style="left:970px;top:59px" width="24" height="24" viewBox="0 0 24 24"><path d="M12.92,5.87 L14.01,3.64 L16.49,4.67 L15.69,7.02 L16.98,8.31 L19.33,7.51 L20.36,9.99 L18.13,11.08 L18.13,12.92 L20.36,14.01 L19.33,16.49 L16.98,15.69 L15.69,16.98 L16.49,19.33 L14.01,20.36 L12.92,18.13 L11.08,18.13 L9.99,20.36 L7.51,19.33 L8.31,16.98 L7.02,15.69 L4.67,16.49 L3.64,14.01 L5.87,12.92 L5.87,11.08 L3.64,9.99 L4.67,7.51 L7.02,8.31 L8.31,7.02 L7.51,4.67 L9.99,3.64 L11.08,5.87Z" fill="none" stroke="#555" stroke-width="1.15" stroke-linejoin="round"/><circle cx="12" cy="12" r="2.5" fill="none" stroke="#555" stroke-width="1.15"/></svg><div class="pt" style="left:666px;top:107.64px;font-size:18.5px;color:#555;font-weight:normal;letter-spacing:0px;transform:scaleX(0.99);transform-origin:0 0;">Del</div><div class="pt" style="left:703.5px;top:107.64px;font-size:18.5px;color:#2b579a;font-weight:normal;letter-spacing:0.3px;-webkit-text-stroke:0.5px #2b579a;">Ruso (detectado)</div><svg class="a" style="left:859px;top:113px" width="16" height="10"><path d="M3.5,3.5 L13.5,3.5 L8.5,8.5 Z" fill="#2b579a"/></svg><div class="a" style="left:665.5px;top:141px;width:325.5px;height:288.5px;background:#fff;border:1px solid #adadad"></div><svg class="a" style="left:962px;top:148px" width="18" height="18"><path d="M2.5,2.5 L16,16 M16,2.5 L2.5,16" stroke="#555" stroke-width="1.3"/></svg><div class="a" style="left:673px;top:0"><div class="pl" style="top:148.83px">Дворцовая площадь в Санкт-</div>
<div class="pl" style="top:169.95px">Петербурге <b>–</b> место, любимое гостями</div>
<div class="pl" style="top:191.07px">и жителями города, сердце Северной</div>
<div class="pl" style="top:212.19px">столицы. Это один из самых красивых</div>
<div class="pl" style="top:233.31px">архитектурных ансамблей мира. Над</div>
<div class="pl" style="top:254.43px">его созданием трудились лучшие</div>
<div class="pl" style="top:275.55px">русские зодчие. Свое имя она</div>
<div class="pl" style="top:296.67px">получила по названию Зимнего</div>
<div class="pl" style="top:317.79px">Дворца, построенного по проекту</div>
<div class="pl" style="top:338.91px">архитектора Ф.Б. Растрелли в середине</div>
<div class="pl" style="top:360.03px">18 века.</div></div><svg class="a" style="left:812px;top:434px" width="32" height="32"><g stroke="#2b579a" stroke-width="2.2" fill="none"><path d="M11.2,5 L11.2,28"/><path d="M6.4,9 L11.2,4.8 L16,9"/><path d="M22.2,3 L22.2,26"/><path d="M17.4,22 L22.2,26.2 L27,22"/></g></svg><div class="pt" style="left:665.5px;top:473.34px;font-size:18.5px;color:#555;font-weight:normal;letter-spacing:0px;">A</div><div class="pt" style="left:688px;top:473.34px;font-size:18.5px;color:#2b579a;font-weight:normal;letter-spacing:0px;-webkit-text-stroke:0.5px #2b579a;">Español</div><svg class="a" style="left:763px;top:477px" width="16" height="10"><path d="M3.5,3.5 L13.5,3.5 L8.5,8.5 Z" fill="#2b579a"/></svg><div class="a" style="left:666px;top:504.5px;width:325px;height:178.5px;background:#eef5fd"></div><div class="a" style="left:673px;top:0"><div class="pl" style="top:511.93px">Plaza del Palacio en San Petersburgo es</div>
<div class="pl" style="top:533.20px">un lugar amado por los huéspedes y</div>
<div class="pl" style="top:554.47px">residentes de la ciudad, el corazón de la</div>
<div class="pl" style="top:575.74px">capital del norte. Es uno de los conjuntos</div>
<div class="pl" style="top:597.01px">arquitectónicos más bellos del mundo.</div>
<div class="pl" style="top:618.28px">Los mejores arquitectos rusos trabajaron</div>
<div class="pl" style="top:639.55px">en su creación. Fue nombrado en honor</div>
<div class="pl" style="top:660.82px">al Palacio de Invierno, diseñado por el</div></div><div class="a" style="left:652px;top:683px;width:354px;height:1px;background:#d2d2d2"></div><div class="a" style="left:993px;top:98px;width:18.5px;height:585.5px;background:#ececec"></div><div class="a" style="left:993.5px;top:136.5px;width:16.5px;height:378.5px;background:#cdcdcd"></div><svg class="a" style="left:992px;top:112px" width="20" height="18"><path d="M4.2,14.1 L10.05,6.3 L15.9,14.1" stroke="#606060" stroke-width="2.6" fill="none"/></svg><svg class="a" style="left:992px;top:650px" width="20" height="18"><path d="M4.2,4.7 L10.15,12.9 L16.1,4.7" stroke="#606060" stroke-width="2.6" fill="none"/></svg><div class="pt" style="left:652.5px;top:692.44px;font-size:12px;color:#555;font-weight:normal;letter-spacing:0px;transform:scaleX(0.955);transform-origin:0 0;">Traducido por</div><div class="a" style="left:728px;top:690.5px;width:8.3px;height:8.3px;background:#f25022"></div><div class="a" style="left:737.2px;top:690.5px;width:8.3px;height:8.3px;background:#7fba00"></div><div class="a" style="left:728px;top:699.7px;width:8.3px;height:8.3px;background:#00a4ef"></div><div class="a" style="left:737.2px;top:699.7px;width:8.3px;height:8.3px;background:#ffb900"></div><div class="pt" style="left:749px;top:692.57px;font-size:13.5px;color:#6b6b6b;font-weight:normal;letter-spacing:0.2px;-webkit-text-stroke:0.5px #6b6b6b;">Microsoft</div><div class="pt" style="left:870px;top:692.14px;font-size:12px;color:#3d6fb0;font-weight:normal;letter-spacing:0px;transform:scaleX(0.93);transform-origin:0 0;">Declaración de privacidad</div>
</body></html>
